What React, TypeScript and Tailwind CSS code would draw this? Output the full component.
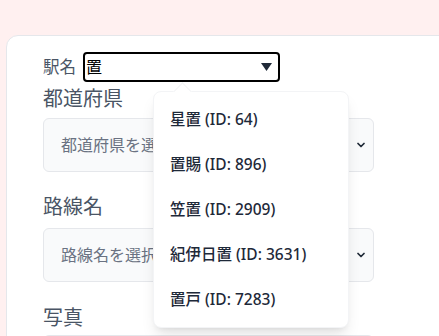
import React from "react";

const font = { fontFamily: '"Noto Sans", "Noto Sans CJK JP", sans-serif' };

function Chevron() {
  return (
    <svg width="12" height="12" viewBox="0 0 24 24" fill="none" stroke="#1f2937" strokeWidth="3.5" strokeLinecap="round" strokeLinejoin="round">
      <path d="M6 9l6 6 6-6" />
    </svg>
  );
}

function FakeSelect({ placeholder }: { placeholder: string }) {
  return (
    <div className="flex items-center justify-between h-[54px] w-[331px] rounded-md border border-gray-200 bg-[#f9fafb] pl-[17px] pr-[6px]">
      <span className="text-[16px] text-gray-500">{placeholder}</span>
      <Chevron />
    </div>
  );
}

const items = ["星置 (ID: 64)", "置賜 (ID: 896)", "笠置 (ID: 2909)", "紀伊日置 (ID: 3631)", "置戸 (ID: 7283)"];

export default function App() {
  return (
    <div className="h-[336px] w-[439px] overflow-hidden bg-[#fff0f0] pt-[35px] pl-[6px]" style={font}>
      <div className="w-[520px] h-[400px] rounded-tl-xl border border-gray-200 bg-white pl-[36px] pt-[16px]">
        <div className="flex items-center h-[30px]">
          <span className="w-[40px] text-[16.5px] text-gray-600">駅名</span>
          <div className="relative">
            <div className="flex items-center justify-between w-[197px] h-[30px] rounded-[4px] border-2 border-black pl-[1px] pr-[6px]">
              <span className="text-[16px] text-black">置</span>
              <svg width="11" height="8" viewBox="0 0 11 8">
                <polygon points="0,0 11,0 5.5,8" fill="#1f2937" />
              </svg>
            </div>
            <div className="absolute left-[70px] top-[39px] z-10 w-[196px] rounded-lg border border-gray-100 bg-white py-[5px] shadow-lg">
              <div className="absolute -top-[7px] left-[22px] h-[13px] w-[13px] rotate-45 border-l border-t border-gray-100 bg-white" />
              {items.map((t) => (
                <div key={t} className="relative flex h-[45px] items-center px-[16px] text-[15.5px] font-medium text-gray-800">
                  {t}
                </div>
              ))}
            </div>
          </div>
        </div>
        <div className="mt-[3px] h-[28px] leading-[28px] text-[20px] text-gray-600">都道府県</div>
        <div className="mt-[5px]">
          <FakeSelect placeholder="都道府県を選択" />
        </div>
        <div className="mt-[21px] h-[28px] leading-[28px] text-[20px] text-gray-600">路線名</div>
        <div className="mt-[7px]">
          <FakeSelect placeholder="路線名を選択" />
        </div>
        <div className="mt-[22px] h-[28px] leading-[28px] text-[20px] text-gray-600">写真</div>
        <div className="mt-[3px] h-[40px] w-[331px] rounded-md border border-gray-200 bg-white" />
      </div>
    </div>
  );
}
